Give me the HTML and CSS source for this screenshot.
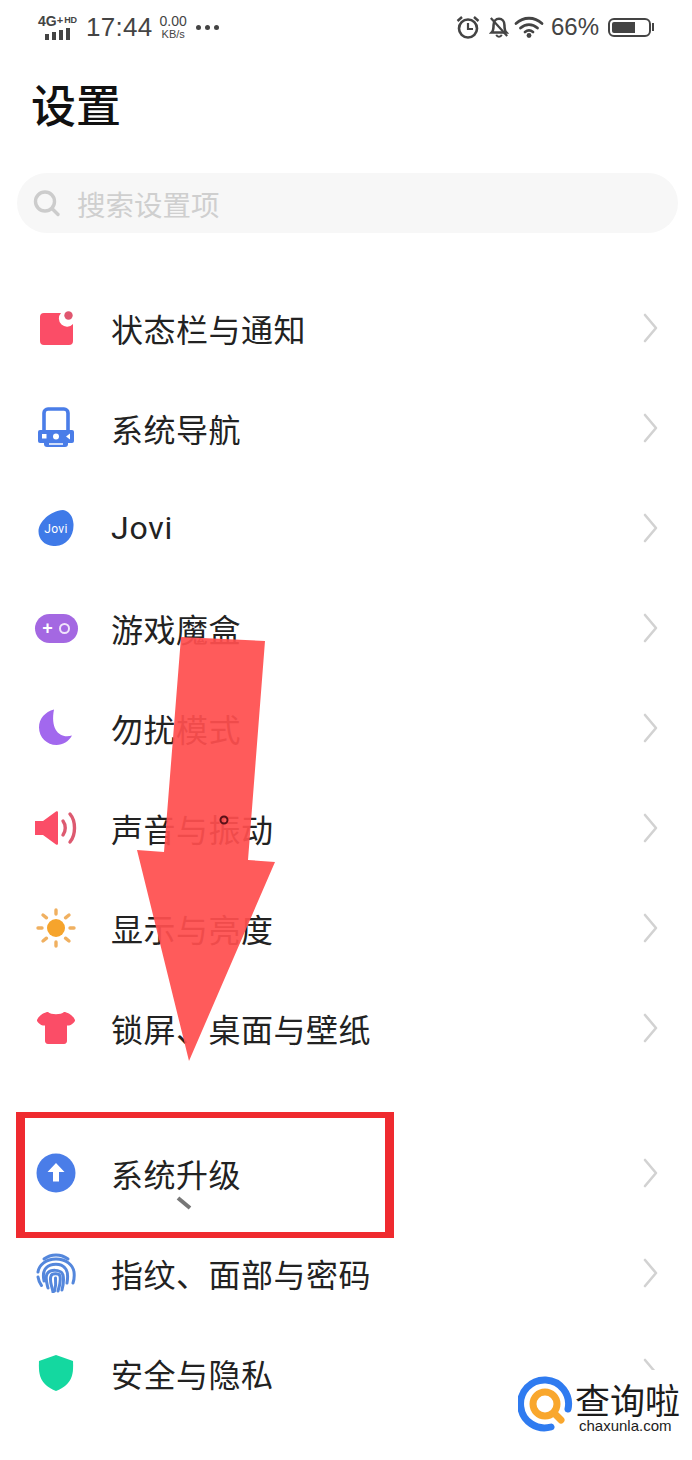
FILE: index.html
```html
<!DOCTYPE html>
<html lang="en">
<head>
    <meta charset="UTF-8">
    <meta name="viewport" content="width=device-width, initial-scale=1.0">
    <title>设置</title>
    <link rel="stylesheet" href="styles.css">
</head>
<body>
    <div class="screen">
        <!-- status bar -->
        <div class="status-bar">
            <div class="status-left">
                <div class="network">
                    <div class="network-label">4G<span class="plus">+</span><span class="hd">HD</span></div>
                    <div class="signal">
                        <i class="s1"></i><i class="s2"></i><i class="s3"></i><i class="s4"></i>
                    </div>
                </div>
                <span class="time">17:44</span>
                <div class="speed"><span>0.00</span><span class="unit">KB/s</span></div>
                <div class="dots"><i></i><i></i><i></i></div>
            </div>
            <div class="status-right">
                <svg class="st-icon alarm" width="24" height="24" viewBox="0 0 24 24" fill="none" stroke="#444" stroke-width="2.6">
                    <circle cx="12" cy="13.5" r="9"/>
                    <path d="M12 8v6h5" stroke-width="2.2"/>
                    <path d="M1.5 6 6 2M22.5 6 18 2" stroke-width="2.4"/>
                </svg>
                <svg class="st-icon bell" width="20" height="24" viewBox="0 0 22 24" fill="none" stroke="#444" stroke-width="2.8">
                    <path d="M3 18c2-2 2-4 2-8 0-4 2.500-7 6-7s6 3 6 7c0 4 0 6 2 8z"/>
                    <path d="M8 20.500c.6 1.600 1.600 2.300 3 2.300s2.400-.7 3-2.300" stroke-width="2.2"/>
                    <path d="M2 2l18 20" stroke-width="2.4"/>
                </svg>
                <svg class="st-icon wifi" width="30" height="24" viewBox="0 0 30 24" fill="none" stroke="#444" stroke-width="2.800" stroke-linecap="round">
                    <path d="M2 8.500c7.500-7 18.500-7 26 0"/>
                    <path d="M6.500 13c5-4.600 12-4.600 17 0"/>
                    <path d="M11 17c2.500-2 5.500-2 8 0"/>
                    <circle cx="15" cy="20.500" r="2.400" fill="#444" stroke="none"/>
                </svg>
                <span class="battery-text">66%</span>
                <div class="battery">
                    <div class="battery-body"><div class="battery-level"></div></div>
                    <div class="battery-cap"></div>
                </div>
            </div>
        </div>

        <h1>设置</h1>

        <div class="search">
            <svg width="30" height="30" viewBox="0 0 30 30" fill="none" stroke="#ccc" stroke-width="3.400">
                <circle cx="13" cy="13.500" r="9.500"/>
                <path d="M20 20.500l6 6" stroke-linecap="round"/>
            </svg>
            <span>搜索设置项</span>
        </div>

        <div class="group">
            <div class="row">
                <div class="row-icon">
                    <svg width="40" height="40" viewBox="0 0 40 40">
                        <path d="M8 5h17a8 8 0 0 0 12 11v17a4 4 0 0 1-4 4H8a4 4 0 0 1-4-4V9a4 4 0 0 1 4-4z" fill="#fb4d67"/>
                        <circle cx="32.500" cy="7.500" r="4.200" fill="#e0566f"/>
                    </svg>
                </div>
                <span class="label">状态栏与通知</span>
                <svg class="chevron" width="16" height="30" viewBox="0 0 16 30"><path d="M3 2l11 13L3 28"/></svg>
            </div>
            <div class="row">
                <div class="row-icon">
                    <svg width="40" height="42" viewBox="0 0 40 42" fill="none" stroke="#4a7de8">
                        <rect x="8" y="2" width="24" height="28" rx="4" stroke-width="3.600"/>
                        <rect x="2" y="23" width="36" height="13" rx="2" fill="#4a7de8" stroke="none"/>
                        <path d="M8 35v2c0 2 1 3 3 3h18c2 0 3-1 3-3v-2" fill="#4a7de8" stroke="none"/>
                        <rect x="6" y="27" width="4.500" height="4.500" fill="#fff" stroke="none"/>
                        <circle cx="20" cy="29.500" r="3" fill="#fff" stroke="none"/>
                        <path d="M34 26.500v6l-4-3z" fill="#fff" stroke="none"/>
                        <path d="M13 37h14" stroke="#fff" stroke-width="1.500"/>
                    </svg>
                </div>
                <span class="label">系统导航</span>
                <svg class="chevron" width="16" height="30" viewBox="0 0 16 30"><path d="M3 2l11 13L3 28"/></svg>
            </div>
            <div class="row">
                <div class="row-icon">
                    <svg width="36" height="36" viewBox="0 0 36 36">
                        <path d="M25 0c6 1 10 6 10.500 14 .5 12-7 21.500-18 22C7 36.500.5 29.500.5 21.500.5 12 12 1 25 0z" fill="#3f7ae8"/>
                        <text class="jovi-text" x="18" y="23" text-anchor="middle">Jovi</text>
                    </svg>
                </div>
                <span class="label latin">Jovi</span>
                <svg class="chevron" width="16" height="30" viewBox="0 0 16 30"><path d="M3 2l11 13L3 28"/></svg>
            </div>
            <div class="row">
                <div class="row-icon">
                    <div class="game"><span class="game-plus">+</span><span class="game-o"></span></div>
                </div>
                <span class="label">游戏魔盒</span>
                <svg class="chevron" width="16" height="30" viewBox="0 0 16 30"><path d="M3 2l11 13L3 28"/></svg>
            </div>
            <div class="row">
                <div class="row-icon">
                    <svg width="40" height="40" viewBox="0 0 40 40">
                        <path d="M18 1.500C9 4 3 10.500 3 19.500 3 29.500 11 37 20.500 37c6.500 0 12-3.500 15.500-9.500C24 31 14 22 18 1.500z" fill="#a268ee"/>
                    </svg>
                </div>
                <span class="label">勿扰模式</span>
                <svg class="chevron" width="16" height="30" viewBox="0 0 16 30"><path d="M3 2l11 13L3 28"/></svg>
            </div>
            <div class="row">
                <div class="row-icon">
                    <svg width="44" height="36" viewBox="0 0 44 36" fill="none">
                        <path d="M1 11h8l13-9.500c1-.6 2-.2 2 1v31c0 1.200-1 1.600-2 1L9 25H1z" fill="#fb4d67"/>
                        <path d="M29 11c3 4 3 10 0 14" stroke="#dd5a70" stroke-width="3.400" stroke-linecap="round"/>
                        <path d="M36 4c6 7 6 21 0 28" stroke="#dd5a70" stroke-width="3.400" stroke-linecap="round"/>
                    </svg>
                </div>
                <span class="label">声音与振动</span>
                <svg class="chevron" width="16" height="30" viewBox="0 0 16 30"><path d="M3 2l11 13L3 28"/></svg>
            </div>
            <div class="row">
                <div class="row-icon">
                    <svg width="40" height="40" viewBox="0 0 40 40" stroke="#f0b060" stroke-width="3.400" stroke-linecap="round">
                        <circle cx="20" cy="20" r="9" fill="#f6a42c" stroke="none"/>
                        <path d="M20 2v4M20 34v4M2 20h4M34 20h4M7 7l3.500 2.800M33 7l-3.500 2.800M7 33l3.500-2.800M33 33l-3.500-2.800"/>
                    </svg>
                </div>
                <span class="label">显示与亮度</span>
                <svg class="chevron" width="16" height="30" viewBox="0 0 16 30"><path d="M3 2l11 13L3 28"/></svg>
            </div>
            <div class="row">
                <div class="row-icon">
                    <svg width="40" height="34" viewBox="0 0 40 34">
                        <path d="M12 1c3 3 13 3 16 0 3 0 9 3 11 8 .4 1.500-3 5-6 5.500h-2V30c0 1.500-1 3-3 3H12c-2 0-3-1.500-3-3V14.500H7C4 14 .6 10.500 1 9c2-5 8-8 11-8z" fill="#fb4d67"/>
                    </svg>
                </div>
                <span class="label">锁屏、桌面与壁纸</span>
                <svg class="chevron" width="16" height="30" viewBox="0 0 16 30"><path d="M3 2l11 13L3 28"/></svg>
            </div>
        </div>

        <div class="group second">
            <div class="row">
                <div class="row-icon">
                    <svg width="40" height="40" viewBox="0 0 40 40">
                        <circle cx="20" cy="20" r="19.500" fill="#4a7de8"/>
                        <path d="M20 10l8.500 9H23v9.500h-6V19h-5.500z" fill="#fff"/>
                    </svg>
                </div>
                <span class="label">系统升级</span>
                <svg class="chevron" width="16" height="30" viewBox="0 0 16 30"><path d="M3 2l11 13L3 28"/></svg>
            </div>
            <div class="row">
                <div class="row-icon">
                    <svg width="40" height="40" viewBox="0 0 40 40" fill="none" stroke="#5487dc" stroke-width="3" stroke-linecap="round">
                        <path d="M8 6c7-5.500 17-5.500 24 0"/>
                        <path d="M2 19C3 12 10 6 20 6c10 0 17 6 18 13 .5 4 0 8-1 11"/>
                        <path d="M2 24c.5 3 1.500 6 3.500 8.500"/>
                        <path d="M8 28c-1-5-1-10 2-13 5-5 15-5 19 0 3 3 3 9 2 15"/>
                        <path d="M12 35c-1.500-6-3-10-1-14 3-5 14-5 16 1 1 4 .5 9-1 15"/>
                        <path d="M17 39c-1-6-4-11-2-16 1-3 8-3 9 0 .8 4 0 9-2 15"/>
                        <path d="M19.500 25c.5 5 .3 9-1 13"/>
                    </svg>
                </div>
                <span class="label">指纹、面部与密码</span>
                <svg class="chevron" width="16" height="30" viewBox="0 0 16 30"><path d="M3 2l11 13L3 28"/></svg>
            </div>
            <div class="row">
                <div class="row-icon">
                    <svg width="36" height="36" viewBox="0 0 36 36">
                        <path d="M18 0l17 6c.5 13 0 23-17 30C1 29 .5 19 1 6z" fill="#14d8a0"/>
                    </svg>
                </div>
                <span class="label">安全与隐私</span>
                <svg class="chevron" width="16" height="30" viewBox="0 0 16 30"><path d="M3 2l11 13L3 28"/></svg>
            </div>
        </div>

        <!-- annotations drawn on top of the screenshot -->
        <svg class="arrow" width="692" height="1460" viewBox="0 0 692 1460">
            <polygon points="181,637 265,641 248,860 275,862 189,1061 137,850 164,852" fill="#ff4f4f" fill-opacity=".93"/>
            <circle cx="224" cy="820" r="3.500" fill="none" stroke="#5a1018" stroke-width="2"/>
            <path d="M178 1198l12 10" stroke="#777" stroke-width="4"/>
        </svg>
        <div class="highlight"></div>

        <div class="watermark">
            <svg width="56" height="56" viewBox="0 0 56 56" fill="none">
                <path d="M50 33A24 24 0 1 0 33 51" stroke="#2f7bf0" stroke-width="7" stroke-linecap="round"/>
                <circle cx="27" cy="28" r="12" stroke="#f9a72d" stroke-width="7"/>
                <path d="M36 37l7 7" stroke="#f9a72d" stroke-width="7" stroke-linecap="round"/>
            </svg>
            <div class="wm-text">
                <div class="wm-name">查询啦</div>
                <div class="wm-url">chaxunla.com</div>
            </div>
        </div>
    </div>
</body>
</html>
```

FILE: styles.css
```css
* {
    box-sizing: border-box;
}

html, body {
    margin: 0;
    padding: 0;
    background-color: #fff;
}

.screen {
    position: relative;
    width: 692px;
    height: 1460px;
    overflow: hidden;
    background-color: #fff;
    color: #222;
    font-family: 'Noto Sans CJK SC', 'Liberation Sans', sans-serif;
}

/* status bar */
.status-bar {
    display: flex;
    justify-content: space-between;
    align-items: center;
    height: 52px;
    padding: 2px 38px 0 38px;
    color: #444;
    font-family: 'Liberation Sans', sans-serif;
}

.status-left,
.status-right {
    display: flex;
    align-items: center;
}

.network {
    width: 42px;
}

.network-label {
    font-size: 14px;
    line-height: 12px;
    font-weight: bold;
    white-space: nowrap;
}

.plus {
    font-size: 11px;
    vertical-align: 2px;
}

.hd {
    font-size: 9px;
    vertical-align: 3px;
    margin-left: 1px;
}

.signal {
    display: flex;
    align-items: flex-end;
    gap: 3px;
    height: 12px;
    margin-top: 1px;
    padding-left: 7px;
}

.signal i {
    display: block;
    width: 4px;
    background-color: #444;
}

.s1 { height: 6px; }
.s2 { height: 8px; }
.s3 { height: 10px; }
.s4 { height: 12px; }

.time {
    margin-left: 6px;
    font-size: 26px;
    letter-spacing: .3px;
}

.speed {
    display: flex;
    flex-direction: column;
    margin-left: 7px;
    font-size: 14px;
    line-height: 13px;
    align-items: center;
}

.speed .unit {
    font-size: 11px;
    line-height: 12px;
}

.dots {
    display: flex;
    gap: 4px;
    margin-left: 9px;
}

.dots i {
    display: block;
    width: 5px;
    height: 5px;
    border-radius: 50%;
    background-color: #444;
}

.st-icon.alarm {
    margin-right: 9px;
}

.st-icon.bell {
    margin-right: 5px;
}

.st-icon.wifi {
    margin-right: 7px;
}

.battery-text {
    font-size: 24px;
}

.battery {
    display: flex;
    align-items: center;
    margin-left: 9px;
}

.battery-body {
    width: 43px;
    height: 19px;
    padding: 2px;
    border: 2px solid #444;
    border-radius: 6px;
}

.battery-level {
    width: 66%;
    height: 100%;
    background-color: #444;
    border-radius: 2px 0 0 2px;
}

.battery-cap {
    width: 2px;
    height: 8px;
    margin-left: 1px;
    background-color: #444;
}

h1 {
    margin: 21px 0 0 31px;
    font-size: 45px;
    line-height: 62px;
    font-weight: 500;
    color: #111;
}

.search {
    display: flex;
    align-items: center;
    gap: 15px;
    height: 60px;
    margin: 38px 14px 0 17px;
    padding: 0 0 0 15px;
    border-radius: 30px;
    background-color: #f7f7f7;
    color: #cfcfcf;
    font-size: 28.500px;
}

.group {
    margin-top: 45px;
}

.group.second {
    margin-top: 45px;
}

.row {
    display: flex;
    align-items: center;
    height: 100px;
    padding: 0 34px 0 36px;
}

.row-icon {
    display: flex;
    justify-content: center;
    align-items: center;
    width: 40px;
    height: 44px;
    margin-right: 35px;
    flex-shrink: 0;
}

.row-icon svg {
    flex-shrink: 0;
}

.label {
    flex-grow: 1;
    font-size: 32px;
    line-height: 44px;
    letter-spacing: .5px;
}

.label.latin {
    font-family: 'Roboto', sans-serif;
    letter-spacing: .8px;
}

.chevron {
    flex-shrink: 0;
    fill: none;
    stroke: #d2d2d2;
    stroke-width: 2.600;
    stroke-linecap: round;
    stroke-linejoin: round;
}

.jovi-text {
    fill: #fff;
    font-family: 'Roboto', sans-serif;
    font-size: 12px;
    letter-spacing: .3px;
}

.game {
    display: flex;
    flex-shrink: 0;
    justify-content: center;
    align-items: center;
    gap: 6px;
    width: 43px;
    height: 29px;
    border-radius: 15px;
    background-color: #a468e2;
    color: #fff;
}

.game-plus {
    font-family: 'Liberation Sans', sans-serif;
    font-size: 18px;
    font-weight: bold;
    line-height: 18px;
}

.game-o {
    width: 11px;
    height: 11px;
    border: 2px solid #f0e4fb;
    border-radius: 50%;
}

/* red annotations */
.arrow {
    position: absolute;
    top: 0;
    left: 0;
}

.highlight {
    position: absolute;
    top: 1112px;
    left: 16px;
    width: 378px;
    height: 126px;
    border-style: solid;
    border-width: 6px 9px;
    border-color: #ef2a2f;
}

.watermark {
    position: absolute;
    top: 1370px;
    left: 512px;
    display: flex;
    gap: 1px;
    width: 180px;
    height: 70px;
    padding: 6px 0 0 6px;
    background-color: #fff;
}

.wm-text {
    color: #1c1c1c;
}

.wm-name {
    font-size: 35px;
    line-height: 38px;
    margin-top: 4px;
    white-space: nowrap;
}

.wm-url {
    margin-left: 4px;
    font-family: 'Liberation Sans', sans-serif;
    font-size: 15px;
    line-height: 16px;
}
```
